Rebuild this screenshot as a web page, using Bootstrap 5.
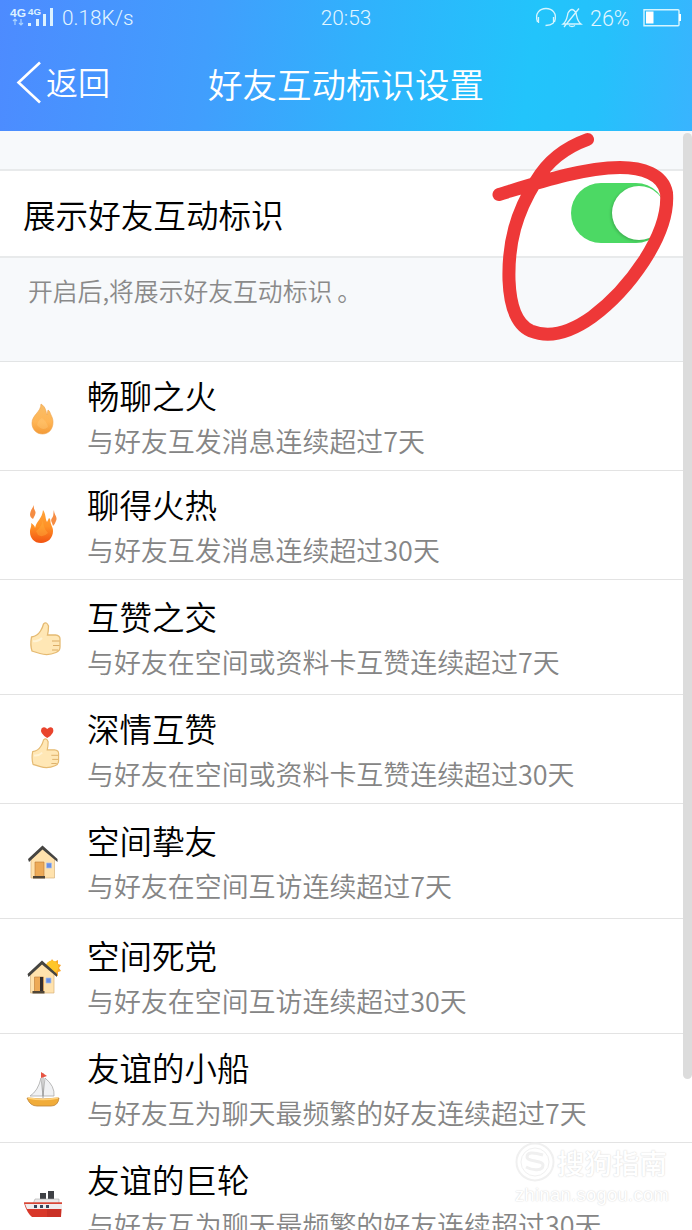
<!DOCTYPE html>
<html lang="zh-CN">
<head>
<meta charset="utf-8">
<meta name="viewport" content="width=device-width, initial-scale=1">
<title>好友互动标识设置</title>
<link href="https://cdn.jsdelivr.net/npm/bootstrap@5.3.0/dist/css/bootstrap.min.css" rel="stylesheet">
<style>
body{font-family:"Noto Sans CJK SC",sans-serif;font-weight:350;color:#000;background:#fff;height:1230px;overflow:hidden;white-space:nowrap}
.topbar{height:131px;background:linear-gradient(97deg,#4d8bff 0%,#419efd 30%,#30b2fc 52%,#22c4fb 76%,#25c1fb 86%,#39b4fe 100%)}
.status{height:38px;font-family:Roboto,sans-serif;font-weight:300;font-size:20.8px;line-height:37px;color:#e2f6ff}
.percent{font-size:21.5px;width:43px}
.titlebar{height:92px}
.back-text{font-size:32px;line-height:48px;margin-top:-6px}
.page-title{font-size:34.5px;line-height:50px;margin-top:-3px}
.spacer{height:38px;background:#f7f9fb}
.toggle-row{height:89px;border-top:2px solid #e8eaeb;border-bottom:2px solid #e8eaeb;padding-left:23px;font-size:32.6px}
.toggle-row span{margin-top:2px}
.switch{width:95px;height:60px;border-radius:30px;background:#4cd964;margin:-2px 26px 0 0;padding:3px 0}
.knob{width:54px;height:54px;border-radius:50%;background:#fff;box-shadow:-1px 1px 3px #0003}
.note{height:104px;background:#f7f9fb;border-bottom:1px solid #e2e4e5;font-size:24.8px;line-height:36px;padding:14px 0 0 28px;color:#8a8a8a}
.note .stop{margin-left:5px}
.entry{height:109px;border-bottom:1px solid #e3e3e3}
.entry.tall{height:115px}
.entry .words{padding-top:10px}
.entry.tall .words{padding-top:13px}
.entry h2{font-size:32.5px;line-height:46px;margin:0;font-weight:350}
.entry p{font-size:26.95px;line-height:45px;margin:0;color:#858585}
.entry svg{width:87px;height:109px;flex:none}
.scrollthumb{right:0;top:133px;width:9.5px;height:946px;border-radius:5px;background:#dcdcdc}
.scribble{left:480px;top:125px}
.watermark{right:20px;top:1141px;width:157px;color:#fff;text-shadow:0 0 2px #ddd,0 0 1px #e0e0e0}
.watermark .brand{font-size:27.5px;line-height:42px;font-weight:500}
.watermark .site{font:400 18.4px/24px "Liberation Sans",sans-serif;letter-spacing:.3px}
</style>
</head>
<body class="position-relative">
<header class="topbar text-white">
  <div class="status d-flex position-relative">
    <svg width="62" height="38" fill="#dcf2ff"><g font-family="Liberation Sans" font-weight="700" font-size="10.5"><text x="10" y="17" textLength="16" lengthAdjust="spacingAndGlyphs">4G</text><text x="28" y="15" font-size="8.5" textLength="13" lengthAdjust="spacingAndGlyphs">4G</text></g><path d="M28 23h3v3h-3zM36 19h3v7h-3zM43 14h3v12h-3zM50 8h3v18h-3z"/><path d="M15 25v-6m-2 2 2-2 2 2M21 19v6m-2-2 2 2 2-2" fill="none" stroke="#a8d2ff" stroke-width="1.2"/></svg>
    <span>0.18K/s</span>
    <span class="position-absolute start-50 translate-middle-x">20:53</span>
    <div class="ms-auto d-flex">
      <svg width="56" height="38" fill="none" stroke="#d5f5ff" stroke-width="1.300"><path d="M3.500 22C-3 4 27 4 20.500 22M4.500 17v6M19.500 17v6M19.500 23q-3 2.500-8 2.500"/><path d="M29 24c4-3 4-7 5-11q4-7 8 0c1 4 1 8 5 11zM35 25.500q3 2 6 0M30 27 45 8.500"/></svg>
      <span class="percent">26%</span>
      <svg class="ms-2" width="51" height="38"><path d="M3 9.700h34q1 0 1 1v14q0 1-1 1H3z" fill="none" stroke="#d5f5ff" stroke-width="1.400"/><path d="M5 11.500h7.500v12H5zM38 14h2v7h-2z" fill="#fff"/></svg>
    </div>
  </div>
  <div class="titlebar d-flex align-items-center position-relative">
    <svg width="46" height="48" fill="none" stroke="#fff" stroke-width="2.600"><path d="M40 2.500 18.500 22.500 40 42.500"/></svg>
    <span class="back-text">返回</span>
    <span class="page-title position-absolute start-50 translate-middle-x">好友互动标识设置</span>
  </div>
</header>
<main>
  <div class="spacer"></div>
  <div class="toggle-row d-flex align-items-center justify-content-between">
    <span>展示好友互动标识</span>
    <div class="switch d-flex justify-content-end"><div class="knob"></div></div>
  </div>
  <div class="note">开启后,将展示好友互动标识<span class="stop">。</span></div>

  <div class="entry d-flex">
    <svg viewBox="0 362 87 109"><defs><linearGradient id="f1" x2="0" y2="1"><stop stop-color="#f8bd68"/><stop offset=".6" stop-color="#ffb555"/><stop offset="1" stop-color="#f39a37"/></linearGradient></defs><path d="M41 404c5 3 5 8 6 11l1-5c2 1 2 3 3 5 1 2 2 4 2 7 0 7-4 12-10.500 12S32 429 32 423c0-8 9-11 9-19z" fill="url(#f1)" stroke="#efa24b" stroke-width=".6"/><path d="M37 425q1-5 5-7 5 4 6 9-5 5-11-2" fill="#ffcb7a" opacity=".4"/></svg>
    <div class="words"><h2>畅聊之火</h2><p>与好友互发消息连续超过7天</p></div>
  </div>
  <div class="entry d-flex">
    <svg viewBox="0 471 87 109"><defs><linearGradient id="f2" x2="0" y2="1"><stop stop-color="#ffa43b"/><stop offset=".5" stop-color="#ff9226"/><stop offset="1" stop-color="#f25311"/></linearGradient></defs><path d="M43 510c3 4 2 8 4 12l2-4c2 1 1 3 2 6 1 3 2 4 2 7 0 7-5 12-12 12s-11-5-11-11c0-4 2-6 1-9 2 1 4 3 4 5 2-8 7-9 8-18z" fill="url(#f2)"/><path d="M34 505c-1 6 3 5 1 10l-2 4c-5-3-3-7 1-14zM54 510c0 5 4 7 2 11q-1 3-3 5c-1-4-3-5-1-8 2-2 1-5 2-8z" fill="#f58c43"/><path d="M36 531q5-3 7-11 0 8 5 13-5 5-10 2z" fill="#ffb23f" opacity=".4"/></svg>
    <div class="words"><h2>聊得火热</h2><p>与好友互发消息连续超过30天</p></div>
  </div>
  <div class="entry tall d-flex">
    <svg viewBox="0 580 87 109"><g id="thumb"><path d="M43.500 624q3-3 5 2 0 5-1 9h8q4.500.5 4.500 4v8q0 4-4 5.500-8 3.500-16 1l-8-2.500q-2-6-.500-14 6-1 9-6 2-3 3-7z" fill="#ffe7b5" stroke="#e5ba72" stroke-width="1.300"/><path d="M52 641h7.500M53 645.500h6.500M52 650h6" fill="none" stroke="#dbac65"/><path d="M42 638q-4 4-9 3" fill="none" stroke="#fff3d5" stroke-width="2"/></g></svg>
    <div class="words"><h2>互赞之交</h2><p>与好友在空间或资料卡互赞连续超过7天</p></div>
  </div>
  <div class="entry d-flex">
    <svg viewBox="0 695 87 109"><use href="#thumb" transform="translate(4 172) scale(.91)"/><path d="M47.200 738q-8-5-5.700-9.500 3-2.500 5.700.5 3-3 5.800-.5 2 5-5.800 9.500z" fill="#e9442d"/></svg>
    <div class="words"><h2>深情互赞</h2><p>与好友在空间或资料卡互赞连续超过30天</p></div>
  </div>
  <div class="entry tall d-flex">
    <svg viewBox="0 804 87 109"><g id="home"><path d="m31 858 12-10 11.500 10v20H31z" fill="#ffe2ad" stroke="#d9b37b" stroke-width=".7"/><path d="M35 862h9v15h-9z" fill="#edaa57" stroke="#bc7b35" stroke-width=".6"/><path d="M46.500 863h5v5h-5z" fill="#688fe3" stroke="#a9c0ef" stroke-width=".7"/><path d="m28 859 14.500-13.500L57.500 859v3L42.500 849.500 29 862z" fill="#454441"/><path d="M33 876h12v2.500H33z" fill="#514637"/></g></svg>
    <div class="words"><h2>空间挚友</h2><p>与好友在空间互访连续超过7天</p></div>
  </div>
  <div class="entry tall d-flex">
    <svg viewBox="0 919 87 109"><path d="m52 959 2 3 4-2v4l3 1-2 3 2 3-3 1v4l-4-1-2 3-3-3-4 1 1-4-3-2 3-2-1-4 4 1z" fill="#f9a52b"/><circle cx="52" cy="967" r="6.500" fill="#ffc62a"/><use href="#home" transform="translate(-.5 115)"/><path d="M40 977h3v14h-3z" fill="#352e2c"/></svg>
    <div class="words"><h2>空间死党</h2><p>与好友在空间互访连续超过30天</p></div>
  </div>
  <div class="entry d-flex">
    <svg viewBox="0 1034 87 109"><path d="M41 1078q-3 13-11 18h13zM45 1078q10 8 9 18H43z" fill="#f0f1f3" stroke="#aaa" stroke-width=".8"/><path d="M43 1073v25" stroke="#888" stroke-width=".8"/><path d="m41 1072 6 4-6 2z" fill="#e85442"/><path d="M27 1098q16 2 32 0-1 8-8 8H37q-7 0-10-8z" fill="#f1ac39" stroke="#be8437" stroke-width=".8"/><path d="M28 1098q15 3 30 0" fill="none" stroke="#ffd17a" stroke-width="1.500"/></svg>
    <div class="words"><h2>友谊的小船</h2><p>与好友互为聊天最频繁的好友连续超过7天</p></div>
  </div>
  <div class="entry tall d-flex border-0">
    <svg viewBox="0 1143 87 109"><path d="M40 1193h6v6h-6zM48 1191h6v8h-6z" fill="#3f4145"/><path d="M35 1199h24v5H33z" fill="#e9e9e9" stroke="#aaa" stroke-width=".6"/><path d="M24 1203h38l-1 14H32q-5-4-8-14z" fill="#d8382a"/><path d="M25 1204h37v5H27z" fill="#efeced"/><path d="M24 1203h38" stroke="#d94a3a" stroke-width="1.300"/><path d="M34 1205h3v3h-3zM40 1205h3v3h-3zM46 1205h3v3h-3z" fill="#38445a"/><path d="M47 1209h14v8H47z" fill="#b92922" opacity=".5"/></svg>
    <div class="words"><h2>友谊的巨轮</h2><p>与好友互为聊天最频繁的好友连续超过30天</p></div>
  </div>
</main>
<div class="scrollthumb position-absolute"></div>
<svg class="scribble position-absolute" width="205" height="225" viewBox="480 125 205 225" fill="none" stroke="#ee3838" stroke-width="13" stroke-linecap="round" stroke-linejoin="round"><path d="M587.500 139.500C564 148 547 162 536 181C516 213 508 243 509 280C510 306 517 325 531 331C551 339 571 332 592 317C627 291 670 236 666.500 193C663 174 642 167.500 620 167.500C582 168 540 182 499 194.500"/></svg>
<div class="watermark position-absolute">
  <div class="brand d-flex align-items-center"><svg width="42" height="42" fill="none" stroke="#f0f0f0"><circle cx="20" cy="21" r="18.500" stroke-width="2"/><circle cx="20" cy="21" r="14"/><path d="M28 14q-16-5-16 2c0 5 16 3 16 8 0 6-10 6-17 2" stroke-width="3"/></svg><span>搜狗指南</span></div>
  <div class="site">zhinan.sogou.com</div>
</div>
<script src="https://cdn.jsdelivr.net/npm/bootstrap@5.3.0/dist/js/bootstrap.bundle.min.js"></script>
</body>
</html>
